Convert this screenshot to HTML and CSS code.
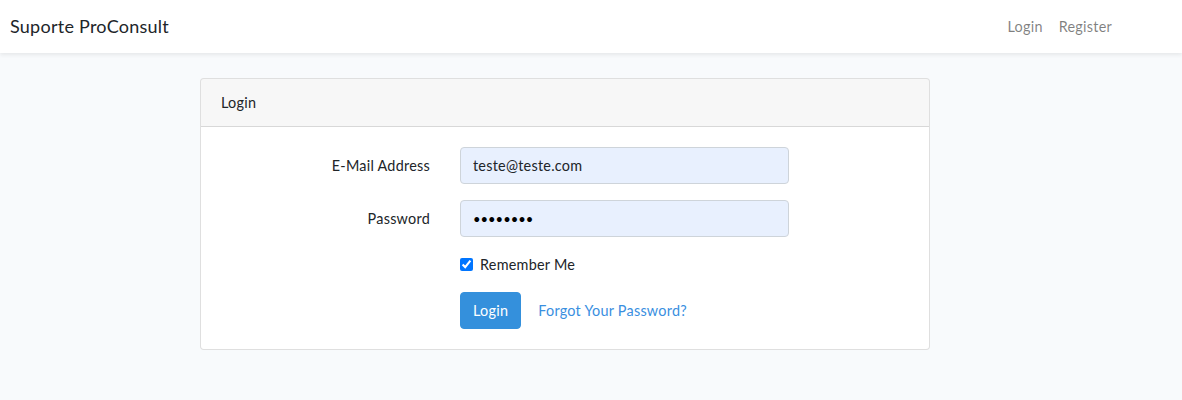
FILE: index.html
```html
<!DOCTYPE html>
<html lang="en">
<head>
<meta charset="utf-8">
<title>Suporte ProConsult</title>
<link rel="stylesheet" href="styles.css">
</head>
<body>
<nav class="navbar">
  <a class="brand" href="#">Suporte ProConsult</a>
  <ul class="nav">
    <li><a class="nav-link" href="#">Login</a></li>
    <li><a class="nav-link" href="#">Register</a></li>
  </ul>
</nav>
<main class="main">
  <div class="card">
    <div class="card-header">Login</div>
    <form class="card-body">
      <div class="form-row">
        <label class="label" for="email">E-Mail Address</label>
        <div class="field"><input id="email" class="input" type="email" value="teste@teste.com"></div>
      </div>
      <div class="form-row">
        <label class="label" for="password">Password</label>
        <div class="field"><input id="password" class="input" type="password" value="12345678"></div>
      </div>
      <div class="form-row">
        <div class="label"></div>
        <div class="field check">
          <input id="remember" class="checkbox" type="checkbox" checked>
          <label for="remember">Remember Me</label>
        </div>
      </div>
      <div class="form-row last">
        <div class="label"></div>
        <div class="field actions">
          <button type="submit" class="btn">Login</button>
          <a class="link" href="#">Forgot Your Password?</a>
        </div>
      </div>
    </form>
  </div>
</main>
</body>
</html>
```
FILE: styles.css
```css
* { box-sizing: border-box; }
html, body { margin: 0; }
body {
  background: #f8fafc;
  color: #212529;
  font-family: Lato, "Noto Sans", sans-serif;
  font-size: 14.4px;
  line-height: 1.6;
  letter-spacing: 0.25px;
}
.navbar {
  height: 53px;
  background: #fff;
  box-shadow: 0 2px 4px rgba(0,0,0,0.075);
  display: flex;
  align-items: center;
  justify-content: space-between;
  padding: 0 62px 0 10px;
  position: relative;
}
.brand {
  font-size: 18px;
  line-height: 27px;
  color: #212529;
  text-decoration: none;
}
.nav {
  list-style: none;
  margin: 0;
  padding: 0;
  display: flex;
}
.nav-link {
  display: block;
  padding: 8px 8px;
  color: rgba(0,0,0,0.5);
  text-decoration: none;
}
.main {
  padding: 25px 0 24px 200px;
}
.card {
  width: 730px;
  background: #fff;
  border: 1px solid rgba(0,0,0,0.125);
  border-radius: 4px;
}
.card-header {
  padding: 12px 20px;
  background: rgba(0,0,0,0.03);
  border-bottom: 1px solid rgba(0,0,0,0.125);
  border-radius: 3px 3px 0 0;
}
.card-body {
  padding: 20px 5px;
  margin: 0;
}
.form-row {
  display: flex;
  margin-bottom: 16px;
}
.form-row.last { margin-bottom: 0; }
.label {
  width: 239px;
  padding: 7px 15px 7px 15px;
  text-align: right;
}
.field {
  width: 359px;
  padding: 0 15px;
}
.input {
  display: block;
  width: 100%;
  height: 37px;
  padding: 6px 12px;
  font: inherit;
  letter-spacing: inherit;
  color: #212529;
  background: #e8f0fe;
  border: 1px solid #ced4da;
  border-radius: 4px;
}
.input[type=password] { color: #000; font-size: 13px; letter-spacing: 0; }
.check {
  display: flex;
  align-items: center;
}
.checkbox {
  width: 13px;
  height: 13px;
  margin: 0 7px 0 0;
  accent-color: #0075ff;
}
.actions {
  display: flex;
  align-items: center;
}
.btn {
  height: 37px;
  padding: 6px 12px;
  font: inherit;
  letter-spacing: inherit;
  color: #fff;
  background: #3490dc;
  border: 1px solid #3490dc;
  border-radius: 4px;
}
.link {
  margin-left: 17px;
  color: #3a8fdf;
  text-decoration: none;
}
```
